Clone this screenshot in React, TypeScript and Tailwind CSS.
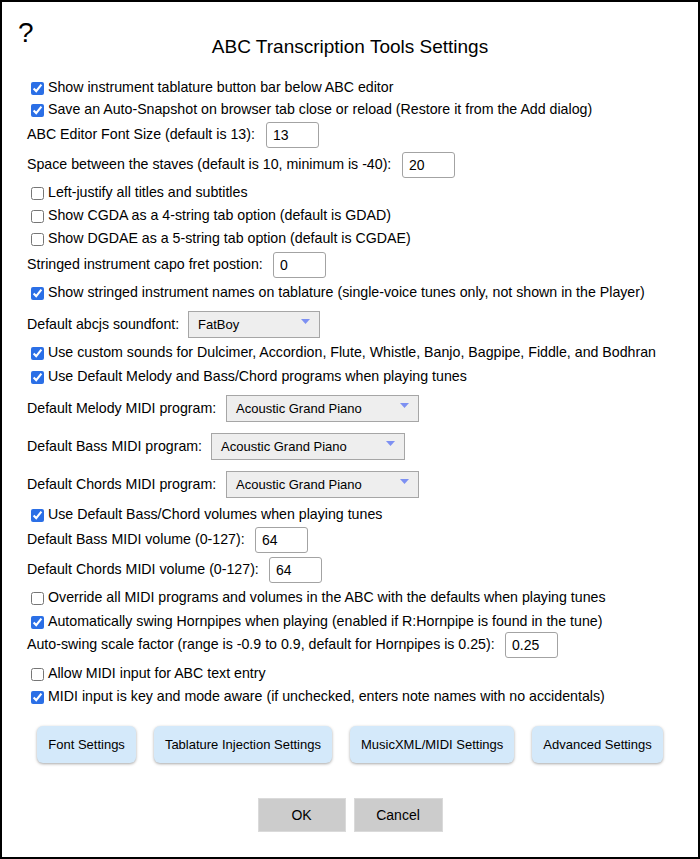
const font = { fontFamily: '"Liberation Sans", Arial, sans-serif' }

type Row =
	| { kind: "cb"; text: string; checked: boolean; mt: string }
	| { kind: "input"; label: string; value: string; lw: string; mt: string }
	| { kind: "select"; label: string; value: string; lw: string; sw: string; mt: string }

const rows: Row[] = [
	{ kind: "cb", text: "Show instrument tablature button bar below ABC editor", checked: true, mt: "mt-[21px]" },
	{ kind: "cb", text: "Save an Auto-Snapshot on browser tab close or reload (Restore it from the Add dialog)", checked: true, mt: "mt-[2px]" },
	{ kind: "input", label: "ABC Editor Font Size (default is 13):", value: "13", lw: "w-[239px]", mt: "mt-[2px]" },
	{ kind: "input", label: "Space between the staves (default is 10, minimum is -40):", value: "20", lw: "w-[375px]", mt: "mt-[4px]" },
	{ kind: "cb", text: "Left-justify all titles and subtitles", checked: false, mt: "mt-[5px]" },
	{ kind: "cb", text: "Show CGDA as a 4-string tab option (default is GDAD)", checked: false, mt: "mt-[3px]" },
	{ kind: "cb", text: "Show DGDAE as a 5-string tab option (default is CGDAE)", checked: false, mt: "mt-[3px]" },
	{ kind: "input", label: "Stringed instrument capo fret postion:", value: "0", lw: "w-[246px]", mt: "mt-[3px]" },
	{ kind: "cb", text: "Show stringed instrument names on tablature (single-voice tunes only, not shown in the Player)", checked: true, mt: "mt-[5px]" },
	{ kind: "select", label: "Default abcjs soundfont:", value: "FatBoy", lw: "w-[161px]", sw: "w-[132px]", mt: "mt-[8px]" },
	{ kind: "cb", text: "Use custom sounds for Dulcimer, Accordion, Flute, Whistle, Banjo, Bagpipe, Fiddle, and Bodhran", checked: true, mt: "mt-[5px]" },
	{ kind: "cb", text: "Use Default Melody and Bass/Chord programs when playing tunes", checked: true, mt: "mt-[4px]" },
	{ kind: "select", label: "Default Melody MIDI program:", value: "Acoustic Grand Piano", lw: "w-[199px]", sw: "w-[193px]", mt: "mt-[8px]" },
	{ kind: "select", label: "Default Bass MIDI program:", value: "Acoustic Grand Piano", lw: "w-[184px]", sw: "w-[194px]", mt: "mt-[11px]" },
	{ kind: "select", label: "Default Chords MIDI program:", value: "Acoustic Grand Piano", lw: "w-[199px]", sw: "w-[193px]", mt: "mt-[11px]" },
	{ kind: "cb", text: "Use Default Bass/Chord volumes when playing tunes", checked: true, mt: "mt-[7px]" },
	{ kind: "input", label: "Default Bass MIDI volume (0-127):", value: "64", lw: "w-[228px]", mt: "mt-[2px]" },
	{ kind: "input", label: "Default Chords MIDI volume (0-127):", value: "64", lw: "w-[242px]", mt: "mt-[4px]" },
	{ kind: "cb", text: "Override all MIDI programs and volumes in the ABC with the defaults when playing tunes", checked: false, mt: "mt-[5px]" },
	{ kind: "cb", text: "Automatically swing Hornpipes when playing (enabled if R:Hornpipe is found in the tune)", checked: true, mt: "mt-[4px]" },
	{ kind: "input", label: "Auto-swing scale factor (range is -0.9 to 0.9, default for Hornpipes is 0.25):", value: "0.25", lw: "w-[478px]", mt: "mt-0" },
	{ kind: "cb", text: "Allow MIDI input for ABC text entry", checked: false, mt: "mt-[6px]" },
	{ kind: "cb", text: "MIDI input is key and mode aware (if unchecked, enters note names with no accidentals)", checked: true, mt: "mt-[3px]" },
]

function SettingRow({ row }: { row: Row }) {
	if (row.kind === "cb") {
		return (
			<label className={`flex items-center h-[20px] whitespace-nowrap ${row.mt}`}>
				<input type="checkbox" defaultChecked={row.checked} className="m-0 ml-[4px] mr-[4px] w-[13px] h-[13px] accent-[#2b6fe6]" />
				<span>{row.text}</span>
			</label>
		)
	}
	if (row.kind === "input") {
		return (
			<div className={`flex items-center h-[26px] whitespace-nowrap ${row.mt}`}>
				<span className={row.lw}>{row.label}</span>
				<input
					type="text"
					defaultValue={row.value}
					style={font}
					className="w-[53px] h-[26px] border border-[#a3a3a3] rounded-[3px] px-[6px] text-[14px] text-black outline-none"
				/>
			</div>
		)
	}
	return (
		<div className={`flex items-center h-[27px] whitespace-nowrap ${row.mt}`}>
			<span className={row.lw}>{row.label}</span>
			<div className={`${row.sw} h-[27px] border border-[#a6a6a6] bg-[#eeeeee] flex items-center justify-between pl-[9px] pr-[9px] text-[13px]`}>
				<span>{row.value}</span>
				<svg width="9" height="5" viewBox="0 0 9 5" className="-mt-[6px]">
					<path d="M0 0 H9 L4.5 5 Z" fill="#7d90f2" />
				</svg>
			</div>
		</div>
	)
}

export default function App() {
	const tabs = ["Font Settings", "Tablature Injection Settings", "MusicXML/MIDI Settings", "Advanced Settings"]

	return (
		<div style={font} className="w-[700px] h-[859px] bg-white border-2 border-black relative text-[14.2px] text-black">
			<span className="absolute left-[16px] top-[17px] text-[28px] leading-[28px]">?</span>
			<div className="pt-[35px] text-center text-[19px] leading-[20px]">ABC Transcription Tools Settings</div>
			<div className="pl-[25px] flex flex-col">
				{rows.map((r, i) => (
					<SettingRow key={i} row={r} />
				))}
			</div>
			<div className="mt-[19px] flex justify-center gap-[18px]">
				{tabs.map((t) => (
					<button
						key={t}
						className="h-[37px] px-[11px] rounded-[6px] bg-[#d4e9fa] text-[13px] text-black shadow-[0_1px_3px_rgba(0,0,0,0.35)]"
					>
						{t}
					</button>
				))}
			</div>
			<div className="mt-[35px] flex justify-center gap-[8px]">
				<button className="w-[88px] h-[34px] bg-[#cccccc] border border-[#dadada] text-[14px]">OK</button>
				<button className="w-[89px] h-[34px] bg-[#cccccc] border border-[#dadada] text-[14px]">Cancel</button>
			</div>
		</div>
	)
}
